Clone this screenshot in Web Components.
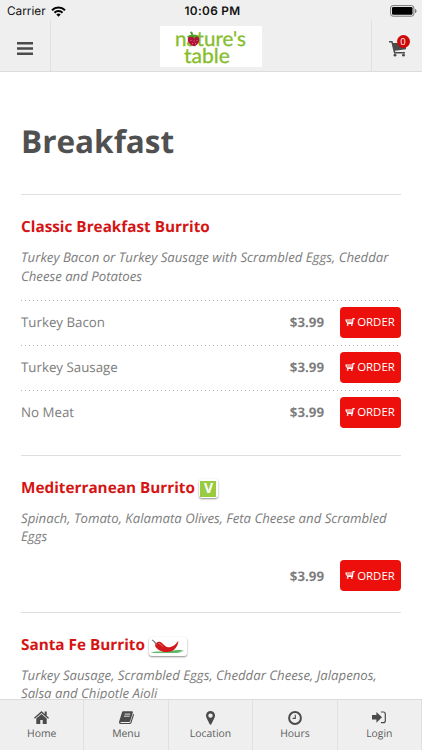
<!DOCTYPE html>
<html lang="en">
<head>
<meta charset="utf-8">
<title>Nature's Table</title>
<style>
    body {
        margin: 0;
        background: #fff;
        font-family: "Open Sans", sans-serif;
        color: #7d7d7d;
        text-rendering: geometricPrecision;
    }
</style>
</head>
<body>
<nt-app>
    <nt-status slot="top"></nt-status>
    <nt-header slot="top" count="0"></nt-header>

    <nt-item name="Classic Breakfast Burrito">
        Turkey Bacon or Turkey Sausage with Scrambled Eggs, Cheddar Cheese and Potatoes
        <nt-option slot="options" price="$3.99" dotted>Turkey Bacon</nt-option>
        <nt-option slot="options" price="$3.99" dotted>Turkey Sausage</nt-option>
        <nt-option slot="options" price="$3.99" dotted>No Meat</nt-option>
    </nt-item>
    <nt-item name="Mediterranean Burrito" single>
        <nt-badge slot="badge" kind="veggie"></nt-badge>
        Spinach, Tomato, Kalamata Olives, Feta Cheese and Scrambled Eggs
        <nt-option slot="options" price="$3.99"></nt-option>
    </nt-item>
    <nt-item name="Santa Fe Burrito" single>
        <nt-badge slot="badge" kind="spicy"></nt-badge>
        Turkey Sausage, Scrambled Eggs, Cheddar Cheese, Jalapenos, Salsa and Chipotle Aioli
    </nt-item>

    <nt-tab slot="tabs" icon="home">Home</nt-tab>
    <nt-tab slot="tabs" icon="book">Menu</nt-tab>
    <nt-tab slot="tabs" icon="pin">Location</nt-tab>
    <nt-tab slot="tabs" icon="clock">Hours</nt-tab>
    <nt-tab slot="tabs" icon="login">Login</nt-tab>
</nt-app>

<script>
const ICONS = {
    bars: '<path d="M0 0h16v2.6H0zM0 5.2h16v2.6H0zM0 10.4h16V13H0z"/>',
    cart: '<path d="M0 0h3.4l.7 2H17v6.2L5.9 9.7l.4 1.4H16v1.5H5L2.4 1.5H0z"/><circle cx="6" cy="14.2" r="1.4"/><circle cx="14.5" cy="14.2" r="1.4"/>',
    home: '<path d="M7.5 0 0 6.7l.9 1L7.5 2l6.6 5.7.9-1-2.3-2V.6h-2v2.3z"/><path d="M7.5 3 2.3 7.5V13h4V9h2.4v4h4V7.5z"/>',
    book: '<path d="M4.4.2h8.2c1 0 1.5.7 1.2 1.6l-2.5 8.1c-.3.8-.9 1.1-1.7 1.1H2c-.8 0-.9.9 0 .9h8.3c.8 0 1.1-.3 1.3-.9l2.6-8.3c.7.3.9.9.7 1.5l-2.4 7.6c-.3.9-1 1.3-1.9 1.3H2C.5 13.1-.3 11.7.2 10.3L2.9 1.4C3.1.6 3.7.2 4.4.2z"/><path d="M5.6 3.1h5.7M5 5.2h5.7" stroke="#efefef" stroke-width=".9"/>',
    pin: '<path fill-rule="evenodd" d="M4.5 0A4.5 4.5 0 0 0 0 4.5c0 1 .2 1.6.6 2.4l3.1 6.4c.3.6 1.3.6 1.6 0l3.1-6.4c.4-.8.6-1.4.6-2.4A4.5 4.5 0 0 0 4.5 0zm0 2.4a2.2 2.2 0 1 1 0 4.4 2.2 2.2 0 0 1 0-4.4z"/>',
    clock: '<circle cx="7" cy="7" r="5.9" fill="none" stroke="currentColor" stroke-width="2"/><path d="M7.3 3.8v3.6H4.6" fill="none" stroke="currentColor" stroke-width="1.1"/>',
    login: '<path d="M0 4.1h4.4V1L10 6.3l-5.6 5.4V8.6H0z"/><path d="M8.9 1h2.4c1.3 0 2 .8 2 2v6.7c0 1.2-.7 2-2 2H8.9" fill="none" stroke="currentColor" stroke-width="1.2"/>'
};

function icon(name, width, height) {
    return `<svg width="${width}" height="${height}" viewBox="0 0 ${width} ${height}" fill="currentColor">${ICONS[name]}</svg>`;
}

class App extends HTMLElement {
    constructor() {
        super();
        this.attachShadow({ mode: 'open' });
        this.shadowRoot.innerHTML = `
            <style>
                :host {
                    display: flex;
                    flex-direction: column;
                    height: 750px;
                    overflow: hidden;
                }

                main {
                    flex: 1;
                    min-height: 0;
                    overflow: hidden;
                    padding: 0 21px;
                }

                h1 {
                    margin: 47px 0 31px;
                    font-size: 31.5px;
                    line-height: 45px;
                    height: 44px;
                    color: #505050;
                }

                nav {
                    display: grid;
                    grid-template-columns: repeat(5, 1fr);
                    height: 51px;
                    box-sizing: border-box;
                    border-top: 1px solid #dcdcdc;
                    background: #efefef;
                }
            </style>
            <slot name="top"></slot>
            <main>
                <h1>Breakfast</h1>
                <slot></slot>
            </main>
            <nav><slot name="tabs"></slot></nav>
        `;
    }
}

class Status extends HTMLElement {
    constructor() {
        super();
        this.attachShadow({ mode: 'open' });
        this.shadowRoot.innerHTML = `
            <style>
                :host {
                    display: grid;
                    grid-template-columns: 1fr auto 1fr;
                    align-items: center;
                    height: 20px;
                    padding: 1px 5px 0 7px;
                    box-sizing: border-box;
                    background: #efefef;
                    color: #111;
                    font: 11.8px/20px Inter, sans-serif;
                }

                .carrier {
                    display: flex;
                    align-items: center;
                    gap: 5px;
                }

                .time {
                    font-weight: 600;
                    letter-spacing: .35px;
                    padding-left: 1px;
                }

                .battery {
                    justify-self: end;
                    margin-bottom: 1px;
                }

                svg {
                    display: block;
                }
            </style>
            <span class="carrier">Carrier
                <svg width="15" height="11" viewBox="0 0 15 11" fill="none" stroke="#000" stroke-width="2">
                    <path d="M1 4.2a9.3 9.3 0 0 1 13 0M3.5 6.7a5.7 5.7 0 0 1 8 0"/>
                    <path d="M5.3 8.5a3.2 3.2 0 0 1 4.4 0L7.5 10.7z" fill="#000" stroke="none"/>
                </svg>
            </span>
            <span class="time">10:06 PM</span>
            <svg class="battery" width="27" height="12" viewBox="0 0 27 12">
                <rect x=".6" y=".6" width="23.3" height="10.6" rx="2.4" fill="none" stroke="#777"/>
                <rect x="2" y="2" width="20.5" height="7.8" rx="1.2"/>
                <path d="M25 4c2 .6 2 3.4 0 4z" fill="#777"/>
            </svg>
        `;
    }
}

class Header extends HTMLElement {
    constructor() {
        super();
        this.attachShadow({ mode: 'open' });
    }

    connectedCallback() {
        this.shadowRoot.innerHTML = `
            <style>
                :host {
                    display: grid;
                    grid-template-columns: 51px 1fr 51px;
                    height: 52px;
                    box-sizing: border-box;
                    border-bottom: 1px solid #dcdcdc;
                    background: #efefef;
                    color: #4b4b4b;
                }

                div {
                    display: flex;
                    align-items: center;
                    justify-content: center;
                }

                svg {
                    display: block;
                }

                .menu {
                    border-right: 1px solid #e0e0e0;
                    padding-top: 6px;
                }

                .logo {
                    align-items: flex-start;
                    padding-top: 6px;
                }

                .cart {
                    border-left: 1px solid #e0e0e0;
                    padding-top: 7px;
                }

                .icon {
                    position: relative;
                }

                .count {
                    position: absolute;
                    left: 8px;
                    top: -6px;
                    width: 13px;
                    height: 13px;
                    border-radius: 50%;
                    background: #cf0808;
                    color: #fff;
                    font-size: 9.5px;
                    line-height: 13px;
                    text-align: center;
                }
            </style>
            <div class="menu">${icon('bars', 16, 13)}</div>
            <div class="logo">
                <svg width="102" height="41" viewBox="0 0 102 41" font-family="Lato" font-size="20.5" fill="#86bd2b" stroke="#86bd2b" stroke-width=".3">
                    <rect width="102" height="41" fill="#fff" stroke="none"/>
                    <text x="15" y="19.5" textLength="71" lengthAdjust="spacingAndGlyphs">nature's</text>
                    <text x="24" y="36.5" textLength="46" lengthAdjust="spacingAndGlyphs">table</text>
                    <g stroke="none">
                        <path d="M28 12c1-3 9.5-3.5 11 0 1 4-1.500 7.500-5 8.200-4-.4-7-4.700-6-8.200z" fill="#b5103c"/>
                        <path d="M27 11c1.500-2 3-2.500 4.500-1.700L30 6l2-.5L33.500 9c2-.8 4.500-.3 5.500 1.800l-3-.1-1.500 2-2-2z" fill="#4f9e28"/>
                        <path d="M31 14v1m3-.5v1m3-1.500v1m-4.500 2.200v1m3-1v1" stroke="#f2a5b5" stroke-width=".7"/>
                    </g>
                </svg>
            </div>
            <div class="cart">
                <span class="icon">${icon('cart', 17, 16)}<span class="count">${this.getAttribute('count')}</span></span>
            </div>
        `;
    }
}

class Item extends HTMLElement {
    constructor() {
        super();
        this.attachShadow({ mode: 'open' });
    }

    connectedCallback() {
        this.shadowRoot.innerHTML = `
            <style>
                :host {
                    display: block;
                    border-top: 1px solid #dfdfdf;
                    padding: 22.3px 0 20.2px;
                }

                :host([single]) {
                    padding-bottom: 13.8px;
                }

                h2 {
                    display: flex;
                    align-items: center;
                    gap: 4px;
                    height: 20px;
                    margin: 0 0 11px;
                    font-size: 15.3px;
                    line-height: 20px;
                    color: #d51414;
                }

                p {
                    margin: 0 0 15.2px;
                    font-size: 13.2px;
                    line-height: 18.3px;
                    font-style: italic;
                }

                :host([single]) p {
                    margin-bottom: 7.6px;
                }
            </style>
            <h2>${this.getAttribute('name')}<slot name="badge"></slot></h2>
            <p><slot></slot></p>
            <slot name="options"></slot>
        `;
    }
}

class Option extends HTMLElement {
    constructor() {
        super();
        this.attachShadow({ mode: 'open' });
    }

    connectedCallback() {
        this.shadowRoot.innerHTML = `
            <style>
                :host {
                    display: grid;
                    grid-template-columns: 1fr auto 61px;
                    align-items: center;
                    column-gap: 16px;
                    height: 44.8px;
                    box-sizing: border-box;
                    font-size: 13.3px;
                }

                :host([dotted]) {
                    background: repeating-linear-gradient(90deg, #b5b5b5 0 1.5px, transparent 1.5px 4px) 0 0 / 100% 1px no-repeat;
                }

                button {
                    display: flex;
                    align-items: center;
                    justify-content: center;
                    gap: 2px;
                    height: 31px;
                    padding: 0 1px 1px 0;
                    border: 0;
                    border-radius: 4px;
                    background: #ec0f0b;
                    color: #fff;
                    font: 11.4px "Open Sans", sans-serif;
                }
            </style>
            <span><slot></slot></span>
            <b>${this.getAttribute('price')}</b>
            <button>
                <svg width="10" height="8" viewBox="0 0 10 8" fill="none" stroke="#fff" stroke-width="1.1">
                    <path d="M9.7.6H8L7.5 5.400H2M7.500 2H1L1.500 4 7.500 3.900"/>
                    <path d="M1.800 7h1.600M6 7h1.600" stroke-width="1.500"/>
                </svg>
                ORDER
            </button>
        `;
    }
}

class Badge extends HTMLElement {
    constructor() {
        super();
        this.attachShadow({ mode: 'open' });
    }

    connectedCallback() {
        const veggie = '<span>V</span>';
        const spicy = `
            <svg width="35" height="16" viewBox="0 0 34 16">
                <path d="M0 15c8-3 13 0 20-2 5-1.500 9-1 14-1l-5 1.300 4 .5-7 1.200z" fill="#5fb86b"/>
                <path d="M4.500 7C6 3 9.500 3 11.500 5c3 3 4.500 5 8.500 4 4-1 5-3 8-6-1 6-4 10.500-11 11C11 14.500 5 11 4.500 7z" fill="#d3181b"/>
                <path d="M8 5.500c2 0 3 1.500 4 3" fill="none" stroke="#f0776d"/>
                <path d="M6.500 6.500C4 5.500 4.500 3 1.500 2" fill="none" stroke="#777" stroke-width="1.300"/>
            </svg>`;
        this.shadowRoot.innerHTML = `
            <style>
                :host {
                    display: flex;
                    padding: 1.5px;
                    border-radius: 3px;
                    background: #fff;
                    box-shadow: 0 1px 2px rgba(0, 0, 0, .45);
                    margin-top: 2px;
                }

                span {
                    width: 16px;
                    height: 16px;
                    background: #98cb3f;
                    color: #fff;
                    font: bold 14px/16px "Open Sans", sans-serif;
                    text-align: center;
                }

                svg {
                    display: block;
                }
            </style>
            ${this.getAttribute('kind') === 'veggie' ? veggie : spicy}
        `;
    }
}

class Tab extends HTMLElement {
    constructor() {
        super();
        this.attachShadow({ mode: 'open' });
    }

    connectedCallback() {
        const sizes = { home: [15, 13], book: [15, 14], pin: [9, 14], clock: [14, 14], login: [14, 13] };
        const name = this.getAttribute('icon');
        this.shadowRoot.innerHTML = `
            <style>
                :host {
                    display: flex;
                    flex-direction: column;
                    align-items: center;
                    box-sizing: border-box;
                    border-right: 1px solid #e0e0e0;
                    padding-top: 10px;
                    color: #4b4b4b;
                    font-size: 10.4px;
                    line-height: 15px;
                }

                .icon {
                    display: flex;
                    align-items: center;
                    height: 15px;
                    margin-bottom: 2px;
                }

                .label {
                    color: #5c5c5c;
                }
            </style>
            <span class="icon">${icon(name, ...sizes[name])}</span>
            <span class="label"><slot></slot></span>
        `;
    }
}

customElements.define('nt-app', App);
customElements.define('nt-status', Status);
customElements.define('nt-header', Header);
customElements.define('nt-item', Item);
customElements.define('nt-option', Option);
customElements.define('nt-badge', Badge);
customElements.define('nt-tab', Tab);
</script>
</body>
</html>
